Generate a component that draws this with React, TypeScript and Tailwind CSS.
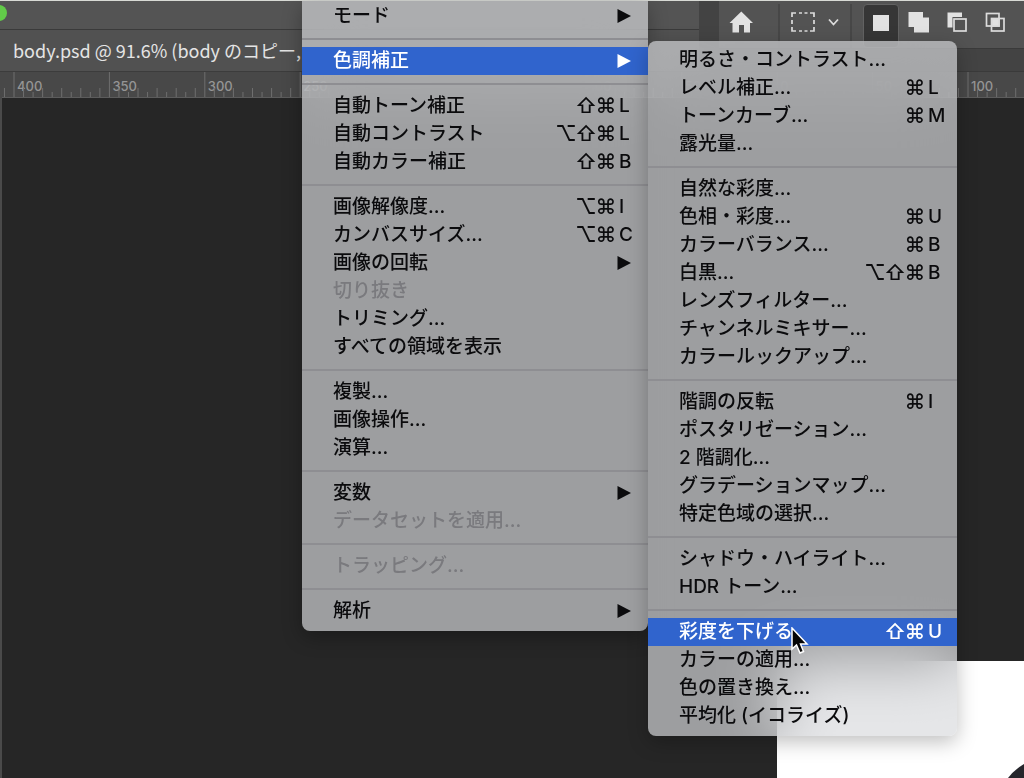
import React, { useEffect, useState } from "react";

type Item = { label: string; mods?: string; keyName?: string; submenu?: boolean; disabled?: boolean; active?: boolean };

const imageMenu: Item[][] = [
  [{ label: "モード", submenu: true }],
  [{ label: "色調補正", submenu: true, active: true }],
  [
    { label: "自動トーン補正", mods: "⇧⌘", keyName: "L" },
    { label: "自動コントラスト", mods: "⌥⇧⌘", keyName: "L" },
    { label: "自動カラー補正", mods: "⇧⌘", keyName: "B" },
  ],
  [
    { label: "画像解像度...", mods: "⌥⌘", keyName: "I" },
    { label: "カンバスサイズ...", mods: "⌥⌘", keyName: "C" },
    { label: "画像の回転", submenu: true },
    { label: "切り抜き", disabled: true },
    { label: "トリミング..." },
    { label: "すべての領域を表示" },
  ],
  [{ label: "複製..." }, { label: "画像操作..." }, { label: "演算..." }],
  [
    { label: "変数", submenu: true },
    { label: "データセットを適用...", disabled: true },
  ],
  [{ label: "トラッピング...", disabled: true }],
  [{ label: "解析", submenu: true }],
];

const adjustMenu: Item[][] = [
  [
    { label: "明るさ・コントラスト..." },
    { label: "レベル補正...", mods: "⌘", keyName: "L" },
    { label: "トーンカーブ...", mods: "⌘", keyName: "M" },
    { label: "露光量..." },
  ],
  [
    { label: "自然な彩度..." },
    { label: "色相・彩度...", mods: "⌘", keyName: "U" },
    { label: "カラーバランス...", mods: "⌘", keyName: "B" },
    { label: "白黒...", mods: "⌥⇧⌘", keyName: "B" },
    { label: "レンズフィルター..." },
    { label: "チャンネルミキサー..." },
    { label: "カラールックアップ..." },
  ],
  [
    { label: "階調の反転", mods: "⌘", keyName: "I" },
    { label: "ポスタリゼーション..." },
    { label: "2 階調化..." },
    { label: "グラデーションマップ..." },
    { label: "特定色域の選択..." },
  ],
  [{ label: "シャドウ・ハイライト..." }, { label: "HDR トーン..." }],
  [
    { label: "彩度を下げる", mods: "⇧⌘", keyName: "U", active: true },
    { label: "カラーの適用..." },
    { label: "色の置き換え..." },
    { label: "平均化 (イコライズ)" },
  ],
];

function MenuRow({ item }: { item: Item }) {
  const tone = item.active
    ? "bg-[#3064cd] text-white"
    : item.disabled
      ? "text-[#7a7a7e]"
      : "text-[#0b0b0d]";
  return (
    <button
      type="button"
      role="menuitem"
      disabled={item.disabled}
      aria-haspopup={item.submenu ? "menu" : undefined}
      className={`flex h-7 w-full items-center pl-[31px] text-left text-[19px] leading-7 font-medium whitespace-nowrap ${tone}`}
    >
      <span className="flex-1">{item.label}</span>
      {item.mods && (
        <span className="flex items-center">
          {Array.from(item.mods).map((m) => (
            <span key={m} className="flex w-5 justify-center text-[21px] leading-[26px]">
              {m}
            </span>
          ))}
          <span className="w-8 pl-[3px]">{item.keyName}</span>
        </span>
      )}
      {item.submenu && (
        <svg viewBox="0 0 14 14" className="mr-[17px] h-3.5 w-3.5" aria-hidden="true">
          <path d="M0.5 0 L14 7 L0.5 14 Z" fill="currentColor" />
        </svg>
      )}
    </button>
  );
}

function Menu({ label, groups, className }: { label: string; groups: Item[][]; className: string }) {
  return (
    <div
      role="menu"
      aria-label={label}
      className={`absolute overflow-hidden bg-[#d8d9dd]/67 backdrop-blur-[30px] ${className}`}
    >
      {groups.map((group, i) => (
        <React.Fragment key={i}>
          {i > 0 && (
            <div role="separator" className="flex h-[17px] items-center">
              <div className="h-0.5 w-full bg-[#8e8e92]" />
            </div>
          )}
          {group.map((item) => (
            <MenuRow key={item.label} item={item} />
          ))}
        </React.Fragment>
      ))}
    </div>
  );
}

const TICK_STEP = 9.54;
const RULER_ORIGIN = 14;
const LABEL_ROOM = 40;

function Ruler() {
  const [width, setWidth] = useState(() => window.innerWidth);
  useEffect(() => {
    const onResize = () => setWidth(window.innerWidth);
    window.addEventListener("resize", onResize);
    return () => window.removeEventListener("resize", onResize);
  }, []);
  const count = Math.ceil((width - RULER_ORIGIN) / TICK_STEP) + 1;
  const ticks = Array.from({ length: count }, (_, i) => i - 1);
  return (
    <svg className="block h-[26px] w-full bg-[#484848]" aria-label="ルーラー">
      {ticks.map((i) => {
        const x = RULER_ORIGIN + i * TICK_STEP;
        const major = i % 10 === 0;
        const top = major ? 0 : i % 2 === 0 ? 20 : 16;
        return (
          <g key={i}>
            <rect x={x - 0.5} y={top} width="1" height={25 - top} fill="#6e6e6e" />
            {major && x + LABEL_ROOM < width && (
              <text x={x + 3} y="19" fontSize="13" fontWeight="500" fill="#959595" fontFamily="Inter, sans-serif">
                {Math.abs(400 - i * 5)}
              </text>
            )}
          </g>
        );
      })}
      <rect x="2" y="25" width="100%" height="1" fill="#5c5c5c" />
    </svg>
  );
}

function OptionsBar() {
  return (
    <div className="absolute top-px right-0 left-[699px] flex h-[71px] flex-col border-b border-[#3a3a3a] bg-[#434343] pl-5">
      <div className="flex h-12 items-start border-b border-[#3a3a3a] bg-[#535353]">
        <button type="button" aria-label="ホーム" className="mt-2.5 ml-2.5 h-6 w-6">
          <svg viewBox="0 0 24 24" className="h-6 w-6" fill="#e2e2e2">
            <path d="M12.3 0.5 L24 12 H21 V21.5 H15 V14 H10 V21.5 H3.5 V12 H0.5 Z" />
          </svg>
        </button>
        <div className="mt-[3px] ml-[25px] h-11 w-0.5 bg-[#474747]" />
        <button type="button" aria-label="長方形選択ツール" className="mt-[9px] ml-2.5 flex h-6 items-center gap-3">
          <svg viewBox="0 0 26 22" className="h-[22px] w-[26px]" fill="none" stroke="#dcdcdc" strokeWidth="1.7">
            <path d="M2 6 V2 H6 M9 2 H12 M14.5 2 H17.5 M20 2 H24 V6 M24 9 V13 M24 16 V20 H20 M17.5 20 H14.5 M12 20 H9 M6 20 H2 V16 M2 13 V9" />
          </svg>
          <svg viewBox="0 0 12 8" className="h-2 w-3" fill="none" stroke="#dcdcdc" strokeWidth="1.8">
            <path d="M1 1.5 L5.500 6.500 L10 1.500" />
          </svg>
        </button>
        <div className="mt-[3px] ml-2.5 h-11 w-0.5 bg-[#474747]" />
        <button
          type="button"
          aria-label="新規選択"
          className="mt-[3px] ml-[11px] flex h-11 w-9 justify-center rounded-sm border border-[#626262] bg-[#363636] pt-2.5"
        >
          <span className="h-4 w-4 bg-[#e2e2e2]" />
        </button>
        <button type="button" aria-label="選択範囲に追加" className="mt-[11px] ml-[9px] h-[22px] w-[22px]">
          <svg viewBox="0 0 22 22" fill="#e2e2e2">
            <path d="M0.500 0 H15 V5.500 H21 V20.500 H6 V15 H0.500 Z" />
          </svg>
        </button>
        <button type="button" aria-label="選択範囲から一部削除" className="mt-[11px] ml-[17px] h-[22px] w-[22px]">
          <svg viewBox="0 0 22 22">
            <path d="M0.500 0.500 H15 V5 H5.500 V15.500 H0.500 Z" fill="#e2e2e2" />
            <rect x="7" y="7" width="12" height="12" fill="none" stroke="#dcdcdc" strokeWidth="1.7" />
          </svg>
        </button>
        <button type="button" aria-label="選択範囲との共通部分" className="mt-[11px] ml-4 h-[22px] w-[22px]">
          <svg viewBox="0 0 22 22" fill="none" stroke="#dcdcdc" strokeWidth="1.7">
            <rect x="1.500" y="1.500" width="12.500" height="12.500" />
            <rect x="6.500" y="6.500" width="12.500" height="12.500" />
            <rect x="7" y="7" width="7" height="7" fill="#e2e2e2" />
          </svg>
        </button>
      </div>
    </div>
  );
}

export default function App() {
  return (
    <main className="relative flex min-h-screen flex-col overflow-hidden bg-[#262626] font-['Inter','Noto_Sans_CJK_JP',sans-serif]">
      <header className="flex h-[30px] items-start border-t border-b border-t-[#d8dad5] border-b-[#3a3a3a] bg-[#545454]">
        <button type="button" aria-label="ウィンドウを拡大" className="mt-1 -ml-[9px] h-4 w-4 rounded-full bg-[#62cb49]" />
      </header>
      <div className="flex h-[42px] items-center border-b border-[#3c3c3c] bg-[#515151] pl-[13px]">
        <h1 className="font-['Noto_Sans_CJK_JP',sans-serif] text-[18px] whitespace-nowrap text-[#e4e4e4]">
          body.psd @ 91.6% (body のコピー,
        </h1>
      </div>
      <Ruler />
      <div className="relative flex flex-1 border-l-2 border-[#4a4a4a] bg-[#262626]">
        <div className="absolute right-0 bottom-0 h-[117px] w-[247px] overflow-hidden bg-white">
          <svg viewBox="0 0 20 20" className="absolute right-0 bottom-0 h-5 w-5" aria-hidden="true">
            <path d="M4 20 Q10 12 20 6 V20 Z" fill="#25252b" />
          </svg>
        </div>
      </div>

      <OptionsBar />
      <Menu
        label="イメージ"
        groups={imageMenu}
        className="top-px left-[302px] w-[346px] rounded-b-lg pt-px pb-[6px] shadow-[0_6px_20px_rgba(0,0,0,0.3)]"
      />
      <Menu
        label="色調補正"
        groups={adjustMenu}
        className="top-[41px] left-[648px] w-[309px] rounded-lg pt-[5px] pb-[6px] shadow-[0_6px_20px_rgba(0,0,0,0.25)]"
      />

      <svg viewBox="0 0 18 28" className="absolute top-[627px] left-[791px] h-7 w-[18px]" aria-hidden="true">
        <path
          d="M1 1 V22 L5.500 18 L9 26 L12.500 24.500 L9.500 17 H16 Z"
          fill="#050505"
          stroke="#ffffff"
          strokeWidth="1.5"
        />
      </svg>
    </main>
  );
}
